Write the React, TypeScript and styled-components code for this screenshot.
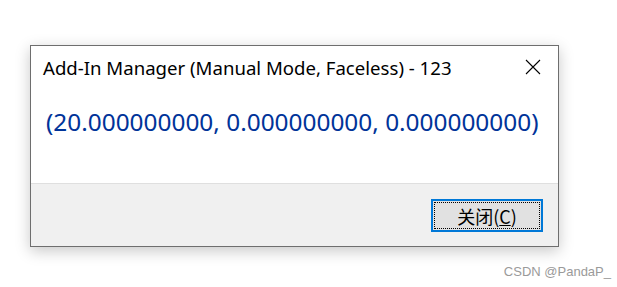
import styled, { createGlobalStyle } from "styled-components";

const GlobalStyle = createGlobalStyle`
  html, body {
    margin: 0;
    padding: 0;
    background: #ffffff;
  }
  body {
    font-family: "Noto Sans", "Noto Sans CJK SC", sans-serif;
  }
`;

const Page = styled.div`
  width: 617px;
  height: 287px;
  padding: 45px 0 0 30px;
  box-sizing: border-box;
  display: flex;
  flex-direction: column;
`;

const Dialog = styled.div`
  width: 529px;
  height: 202px;
  box-sizing: border-box;
  border: 1px solid #6e6e6e;
  background: #ffffff;
  box-shadow: 0 4px 14px rgba(0, 0, 0, 0.22);
  display: flex;
  flex-direction: column;
`;

const TitleBar = styled.div`
  height: 42px;
  display: flex;
  align-items: center;
  justify-content: space-between;
  padding: 0 17px 0 12px;
`;

const Title = styled.span`
  font-size: 18.6px;
  color: #000000;
`;

const CloseIcon = styled.svg`
  width: 16px;
  height: 16px;
`;

const Body = styled.div`
  flex: 1;
  display: flex;
  align-items: flex-start;
  padding: 17px 0 0 15px;
`;

const Result = styled.span`
  font-size: 24.4px;
  line-height: 34px;
  color: #003399;
`;

const Footer = styled.div`
  height: 63px;
  border-top: 1px solid #dfdfdf;
  background: #f0f0f0;
  display: flex;
  align-items: flex-start;
  justify-content: flex-end;
  padding: 15px 15px 0 0;
  box-sizing: border-box;
`;

const Button = styled.button`
  width: 112px;
  height: 33px;
  box-sizing: border-box;
  border: 2px solid #0078d7;
  background: #e1e1e1;
  padding: 1px;
  font-family: "Noto Sans CJK SC", sans-serif;
  font-size: 18px;
  color: #000000;
  cursor: pointer;
`;

const FocusRing = styled.span`
  display: flex;
  align-items: center;
  justify-content: center;
  height: 100%;
  box-sizing: border-box;
  border: 1px dotted #000000;
`;

const Watermark = styled.div`
  width: 581px;
  text-align: right;
  margin-top: 17px;
  font-family: "Liberation Sans", sans-serif;
  font-size: 13px;
  color: #9a9a9a;
`;

export default function App() {
  return (
    <>
      <GlobalStyle />
      <Page>
        <Dialog>
          <TitleBar>
            <Title>Add-In Manager (Manual Mode, Faceless) - 123</Title>
            <CloseIcon viewBox="0 0 16 16">
              <path d="M1 1 L15 15 M15 1 L1 15" stroke="#000" strokeWidth="1.1" />
            </CloseIcon>
          </TitleBar>
          <Body>
            <Result>(20.000000000, 0.000000000, 0.000000000)</Result>
          </Body>
          <Footer>
            <Button>
              <FocusRing>
                关闭(<u>C</u>)
              </FocusRing>
            </Button>
          </Footer>
        </Dialog>
        <Watermark>CSDN @PandaP_</Watermark>
      </Page>
    </>
  );
}
